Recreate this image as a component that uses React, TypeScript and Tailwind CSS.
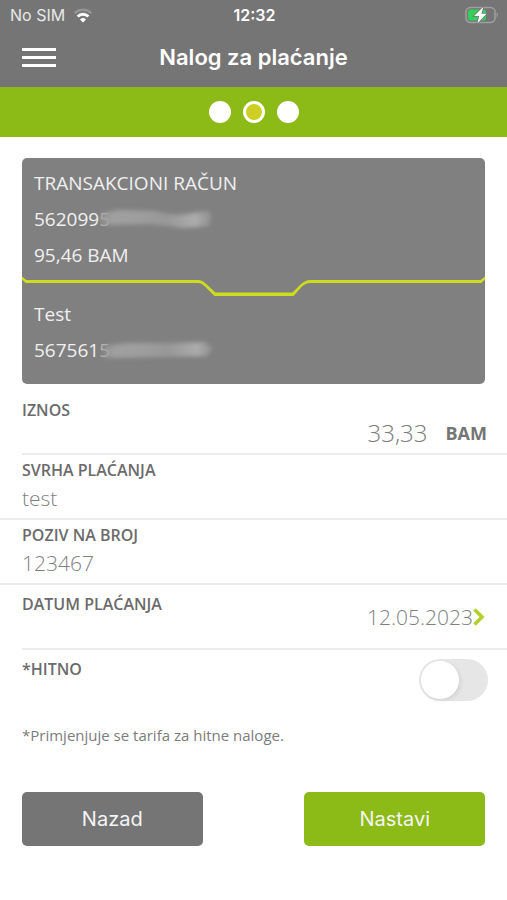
import { useState } from "react";

function WifiIcon() {
  return (
    <svg width="20" height="15" viewBox="0 0 20 15" aria-hidden="true">
      <path d="M1.6 5.2A12 12 0 0 1 18.4 5.2" fill="none" stroke="#949494" strokeWidth="2.6" />
      <path d="M4.6 8.4A7.8 7.8 0 0 1 15.4 8.4" fill="none" stroke="#fff" strokeWidth="2.8" />
      <path d="M10 14.4 7 11.4A4.3 4.3 0 0 1 13 11.4Z" fill="#fff" />
    </svg>
  );
}

function BatteryIcon() {
  return (
    <svg width="34" height="18" viewBox="0 0 34 18" aria-hidden="true">
      <rect x="1" y="1.5" width="29" height="15" rx="4.5" fill="none" stroke="#a0a0a0" strokeWidth="1.5" />
      <path d="M31.6 6.3c1.6.7 1.6 4.7 0 5.4z" fill="#a0a0a0" />
      <rect x="3" y="3.5" width="18" height="11" rx="2.5" fill="#32d05a" />
      <path
        d="M18.4.8 9 10h5.2L12.4 17.2 21.6 7.8h-5.2z"
        fill="#fff"
        stroke="#757575"
        strokeWidth="1.6"
        paintOrder="stroke"
      />
    </svg>
  );
}

function CardDivider() {
  return (
    <div className="flex h-5" aria-hidden="true">
      <svg width="6" height="20" viewBox="0 0 6 20">
        <path d="M0 .5 4.4 4H6v3H3.6L0 3.4z" fill="#cddc1e" />
      </svg>
      <div className="mt-1 h-[3px] flex-1 bg-[#cddc1e]" />
      <svg width="120" height="20" viewBox="0 0 120 20">
        <path
          d="M0 4H3C8 4 10 6 12.500 8.200L21.500 16.500H98.500L106 9C109 6 112 4 117 4H120V7H117C113 7 111 8 108 10.500L99.500 20H20.500L11 10.500C8 8 7 7 3 7H0Z"
          fill="#cddc1e"
        />
      </svg>
      <div className="mt-1 h-[3px] flex-1 bg-[#cddc1e]" />
      <svg width="6" height="20" viewBox="0 0 6 20">
        <path d="M6 .5 1.600 4H0v3h2.400L6 3.400z" fill="#cddc1e" />
      </svg>
    </div>
  );
}

function Account({ digits, hidden, smear }: { digits: string; hidden: string; smear: string }) {
  return (
    <p className="flex items-center">
      {digits}
      <span className="text-[#b4b4b4]">{hidden}</span>
      <svg className="-ml-[11px] overflow-visible blur-[2px]" width="114" height="24" viewBox="0 0 114 24" aria-hidden="true">
        <defs>
          <linearGradient id={`smear-${digits}`}>
            <stop offset="0" stopColor="#9c9c9c" stopOpacity=".6" />
            <stop offset=".12" stopColor="#a0a0a0" />
            <stop offset=".35" stopColor="#9e9e9e" />
            <stop offset=".6" stopColor="#979797" />
            <stop offset=".85" stopColor="#acacac" />
            <stop offset="1" stopColor="#8e8e8e" />
          </linearGradient>
        </defs>
        <path d={smear} fill={`url(#smear-${digits})`} />
      </svg>
    </p>
  );
}

const label = "text-[16px] leading-6 font-semibold text-[#6b6b6b]";
const field = "block h-8 w-full bg-transparent text-[21px] leading-8 font-light text-[#808080] outline-none";

export default function App() {
  const [amount, setAmount] = useState("33,33");
  const [purpose, setPurpose] = useState("test");
  const [reference, setReference] = useState("123467");
  const [urgent, setUrgent] = useState(false);

  return (
    <div className="min-h-screen bg-white font-['Open_Sans',sans-serif]">
      <header className="bg-[#757575] font-['Inter',sans-serif] text-white">
        <div className="grid h-[30px] grid-cols-[1fr_auto_1fr] items-center pr-2 pl-2.5 text-[16px]">
          <div className="flex items-center gap-2 text-[#e8e8e8]">
            No SIM
            <WifiIcon />
          </div>
          <time className="text-center font-semibold">12:32</time>
          <div className="flex justify-end">
            <BatteryIcon />
          </div>
        </div>
        <div className="grid h-[57px] grid-cols-[1fr_auto_1fr] items-center px-[22px] pb-[2px]">
          <button type="button" aria-label="Meni" className="flex w-[34px] flex-col gap-[5px]">
            <span className="h-[3px] bg-white" />
            <span className="h-[3px] bg-white" />
            <span className="h-[3px] bg-white" />
          </button>
          <h1 className="text-[22px] font-semibold">Nalog za plaćanje</h1>
        </div>
      </header>

      <ol className="flex h-[50px] items-center justify-center gap-3 bg-[#8cba17]">
        <li className="size-[22px] rounded-full bg-white" />
        <li aria-current="step" className="size-[22px] rounded-full border-[3px] border-white bg-[#cdd022]" />
        <li className="size-[22px] rounded-full bg-white" />
      </ol>

      <main className="pt-[21px]">
        <section className="mx-[22px] rounded-[5px] bg-[#808080] text-[19px] leading-6 text-[#f0f0f0]">
          <div className="flex flex-col gap-3 px-3 pt-[13px] pb-[9px]">
            <p>TRANSAKCIONI RAČUN</p>
            <Account digits="562099" hidden="5" smear="M3 6 20 3 55 4 78 8 110 4 113 8 110 19 85 21 50 17 6 18 0 14Z" />
            <p>95,46 BAM</p>
          </div>
          <CardDivider />
          <div className="flex flex-col gap-3 px-3 pt-1.5 pb-[22px]">
            <p>Test</p>
            <Account digits="567561" hidden="5" smear="M3 8 30 5 75 5 106 4 114 11 108 18 60 19 4 20 7 13Z" />
          </div>
        </section>

        <form className="pt-3.5" onSubmit={(e) => e.preventDefault()}>
          <div className="ml-[22px] flex h-[57px] justify-between border-b-2 border-[#ececec] pr-5">
            <label htmlFor="amount" className={label}>
              IZNOS
            </label>
            <div className="flex items-center gap-[18px] self-end pb-1">
              <input
                id="amount"
                className="h-8 w-32 bg-transparent text-right text-[24px] leading-8 font-light text-[#7c7c7c] outline-none"
                value={amount}
                onChange={(e) => setAmount(e.target.value)}
              />
              <span className="text-[18px] font-bold text-[#757575]">BAM</span>
            </div>
          </div>

          <div className="border-b-2 border-[#ececec] px-[22px] pt-[3px] pb-1">
            <label htmlFor="purpose" className={label}>
              SVRHA PLAĆANJA
            </label>
            <input id="purpose" className={field} value={purpose} onChange={(e) => setPurpose(e.target.value)} />
          </div>

          <div className="border-b-2 border-[#ececec] px-[22px] pt-[3px] pb-1">
            <label htmlFor="reference" className={label}>
              POZIV NA BROJ
            </label>
            <input id="reference" className={field} value={reference} onChange={(e) => setReference(e.target.value)} />
          </div>

          <div className="ml-[22px] flex h-[65px] items-center justify-between border-b-2 border-[#ececec] pr-[22px]">
            <span id="date-label" className={`${label} self-start pt-[7px]`}>
              DATUM PLAĆANJA
            </span>
            <button
              type="button"
              aria-labelledby="date-label date-value"
              className="flex items-center text-[21px] leading-8 font-light text-[#808080]"
            >
              <span id="date-value">12.05.2023</span>
              <svg width="12" height="18" viewBox="0 0 12 18" aria-hidden="true">
                <path d="M1.500 1.500 9 9 1.500 16.500" fill="none" stroke="#b2cf2b" strokeWidth="3.6" />
              </svg>
            </button>
          </div>

          <div className="flex justify-between pt-[7px] pr-[19px] pl-[22px]">
            <label htmlFor="urgent" className={label}>
              *HITNO
            </label>
            <input
              id="urgent"
              type="checkbox"
              role="switch"
              checked={urgent}
              onChange={(e) => setUrgent(e.target.checked)}
              className="mt-[2px] h-[42px] w-[69px] appearance-none rounded-full bg-[#e6e6e6] p-[2px] before:block before:size-[38px] before:rounded-full before:bg-white before:shadow-[2px_2px_4px_rgba(0,0,0,0.08)] checked:bg-[#8cba17] checked:before:ml-[27px]"
            />
          </div>

          <p className="px-[22px] pt-6 text-[15px] leading-5 text-[#7c7c7c]">*Primjenjuje se tarifa za hitne naloge.</p>

          <div className="flex justify-between px-[22px] pt-[47px] pb-14 font-['Inter',sans-serif] text-[20px] text-[#f4f4f4]">
            <button type="button" className="h-[54px] w-[39%] rounded-[5px] bg-[#757575]">
              Nazad
            </button>
            <button type="submit" className="h-[54px] w-[39%] rounded-[5px] bg-[#8cba17]">
              Nastavi
            </button>
          </div>
        </form>
      </main>
    </div>
  );
}
